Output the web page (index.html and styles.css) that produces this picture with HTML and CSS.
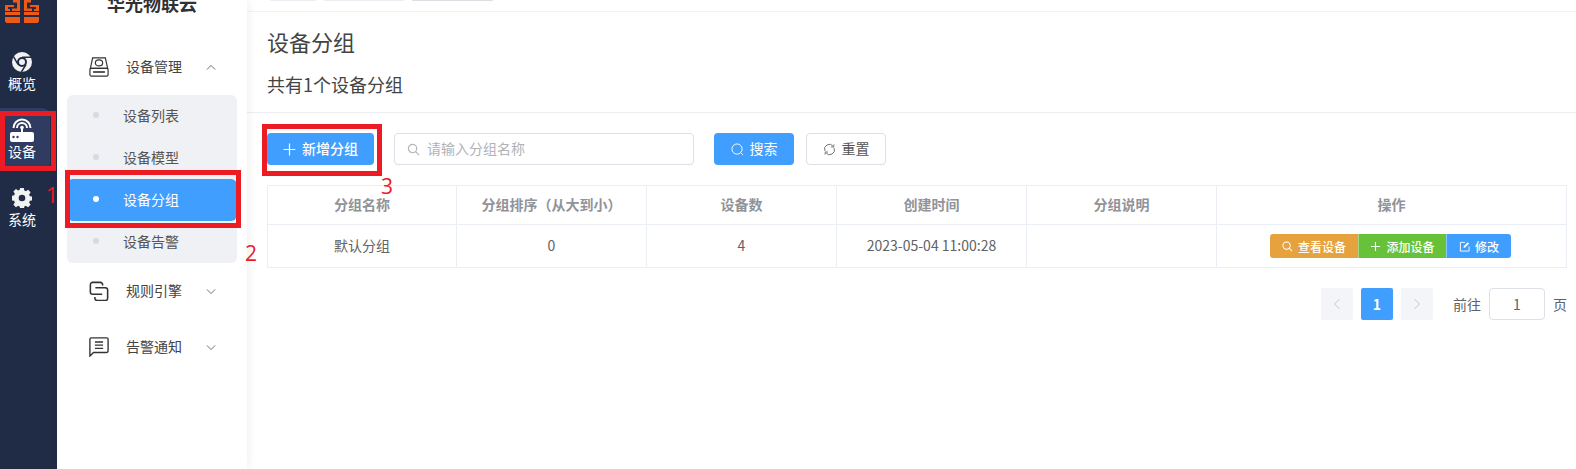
FILE: index.html
```html
<!DOCTYPE html>
<html lang="zh-CN">
<head>
<meta charset="utf-8">
<title>设备分组</title>
<link rel="stylesheet" href="styles.css">
</head>
<body>
<div class="app">
  <nav class="rail">
    <svg class="logo" viewBox="0 0 34 24" aria-hidden="true">
      <path fill="#ed5a17" d="M8 0h7v11H7V8.500h5V2.500H8zM0 5h9v2H3v2h2v2H0zM0 12h15v3H0zM0 17h15v6H1.500L0 21.500zM19 0h7v2.500h-4v6h5V11h-8zM25 5h9v6h-5V9h2V7h-6zM19 12h15v3H19zM19 17h15v4.500L32.500 23H19z"/>
    </svg>
    <a class="rail-item rail-first">
      <svg class="rail-icon" viewBox="0 0 24 24"><circle cx="12" cy="12" r="12" fill="#f2f2f2"/><circle cx="12" cy="12" r="6" fill="#202c46"/><circle cx="12" cy="12" r="3.600" fill="#f2f2f2"/><path d="M12 6.400h11M7.200 15 1.800 5.500M16.800 15l-5.500 9" stroke="#202c46" stroke-width="1.800" fill="none"/></svg>
      <span>概览</span>
    </a>
    <a class="rail-item rail-active">
      <svg class="rail-icon rail-icon-lg" viewBox="0 0 24 24"><path d="M3.500 10a8.500 8.500 0 0 1 17 0M7 10a5 5 0 0 1 10 0" fill="none" stroke="#fff" stroke-width="2"/><path d="M11 9h2v5h-2z" fill="#fff"/><circle cx="12" cy="9.500" r="1.800" fill="#fff"/><rect x="0" y="14" width="24" height="10" rx="2" fill="#fff"/><circle cx="3.500" cy="19" r="1.200" fill="#2f3b60"/><circle cx="7.500" cy="19" r="1.200" fill="#2f3b60"/></svg>
      <span>设备</span>
    </a>
    <a class="rail-item">
      <svg class="rail-icon" viewBox="0 0 24 24"><path fill="#f2f2f2" fill-rule="evenodd" d="M9.800 0h4.400l.6 3.100 1.800.8 2.700-1.700 3 3-1.700 2.700.8 1.900 3 .6v4.400l-3 .6-.8 1.900 1.700 2.700-3 3-2.700-1.700-1.800.8-.6 3H9.800l-.6-3-1.800-.8-2.700 1.700-3-3 1.700-2.700-.8-1.900-3-.6V9.400l3-.6.8-1.900L1.700 4.200l3-3 2.700 1.700 1.800-.8zM12 8a4 4 0 1 0 0 8 4 4 0 0 0 0-8z"/></svg>
      <span>系统</span>
    </a>
  </nav>

  <aside class="menu">
    <h1 class="brand">华光物联云</h1>
    <div class="group">
      <svg class="group-icon" viewBox="0 0 22 22"><g fill="none" stroke="#333" stroke-width="1.300"><path d="M4 1h14l2.500 11.500h-19z"/><rect x="1" y="12.500" width="20" height="8.500" rx="1.500"/><ellipse cx="11" cy="6.500" rx="4" ry="3.300"/><path d="M4.500 16.500h13" stroke-width="1.800"/></g></svg>
      <span class="group-label">设备管理</span>
      <svg class="chev" viewBox="0 0 12 8"><path d="M1 6.500 6 1.500l5 5" fill="none" stroke="#555" stroke-width="1"/></svg>
    </div>
    <ul class="sub">
      <li class="sub-item"><i class="dot"></i>设备列表</li>
      <li class="sub-item"><i class="dot"></i>设备模型</li>
      <li class="sub-item sub-active"><i class="dot"></i>设备分组</li>
      <li class="sub-item"><i class="dot"></i>设备告警</li>
    </ul>
    <div class="group">
      <svg class="group-icon" viewBox="0 0 22 22"><g fill="none" stroke="#333" stroke-width="1.700"><path d="M15 5V4a2.500 2.500 0 0 0-2.500-2.500H4A2.500 2.500 0 0 0 1.500 4v8A2.500 2.500 0 0 0 4 14.500h10.500"/><path d="M7 7.500h11A2.500 2.500 0 0 1 20.500 10v9a2.500 2.500 0 0 1-2.500 2.500H9A2.500 2.500 0 0 1 6.500 19v-1.500"/></g></svg>
      <span class="group-label">规则引擎</span>
      <svg class="chev" viewBox="0 0 12 8"><path d="M1 1.500 6 6.500l5-5" fill="none" stroke="#555" stroke-width="1"/></svg>
    </div>
    <div class="group">
      <svg class="group-icon" viewBox="0 0 22 22"><g fill="none" stroke="#333" stroke-width="1.500"><path d="M2.500 1h17A1.500 1.500 0 0 1 21 2.500v13a1.500 1.500 0 0 1-1.500 1.500H5l-4 4V2.500A1.500 1.500 0 0 1 2.500 1z"/><path d="M6.500 5.500h9M6.500 9h9M6.500 12.500h9"/></g></svg>
      <span class="group-label">告警通知</span>
      <svg class="chev" viewBox="0 0 12 8"><path d="M1 1.500 6 6.500l5-5" fill="none" stroke="#555" stroke-width="1"/></svg>
    </div>
  </aside>

  <main class="main">
    <div class="tabs">
      <span class="tab tab-a"></span><span class="tab tab-b"></span><span class="tab tab-c"></span>
    </div>
    <header class="head">
      <h2 class="title">设备分组</h2>
      <p class="count">共有1个设备分组</p>
    </header>
    <section class="body">
      <div class="toolbar">
        <button class="btn btn-primary btn-add"><svg class="ico" viewBox="0 0 12 12"><path d="M6 .5v11M.5 6h11" stroke="#fff" stroke-width="1.100"/></svg><span class="btn-text">新增分组</span></button>
        <label class="search">
          <svg class="ico ico-search" viewBox="0 0 14 14"><circle cx="6" cy="6" r="4.500" fill="none" stroke="#b4b6bc" stroke-width="1.300"/><path d="m9.500 9.500 3.500 3.500" stroke="#b4b6bc" stroke-width="1.300"/></svg>
          <span class="btn-text">请输入分组名称</span>
        </label>
        <button class="btn btn-primary btn-search"><svg class="ico" viewBox="0 0 14 14"><circle cx="6.500" cy="6.500" r="5.500" fill="none" stroke="#fff" stroke-width="1"/><path d="m10.500 10.500 2.500 2.500" stroke="#fff"/></svg><span class="btn-text">搜索</span></button>
        <button class="btn btn-plain"><svg class="ico" viewBox="0 0 14 14"><path d="M2 8.500A5.200 5.200 0 0 1 11 3.500M12 5.500A5.200 5.200 0 0 1 3 10.500" fill="none" stroke="#666" stroke-width="1"/><path d="m11.800 1.500-.3 3-3-.3M2.200 12.500l.3-3 3 .3" fill="none" stroke="#666" stroke-width=".9"/></svg><span class="btn-text">重置</span></button>
      </div>
      <table class="table">
        <colgroup><col class="c1"><col class="c2"><col class="c3"><col class="c4"><col class="c5"><col class="c6"></colgroup>
        <thead>
          <tr><th>分组名称</th><th>分组排序（从大到小）</th><th>设备数</th><th>创建时间</th><th>分组说明</th><th>操作</th></tr>
        </thead>
        <tbody>
          <tr>
            <td>默认分组</td><td>0</td><td>4</td><td>2023-05-04 11:00:28</td><td></td>
            <td>
              <div class="actions">
                <button class="act act-view"><svg class="ico-s" viewBox="0 0 12 12"><circle cx="5" cy="5" r="4" fill="none" stroke="#fff" stroke-width="1.100"/><path d="m8 8 3 3" stroke="#fff" stroke-width="1.100"/></svg>查看设备</button>
                <button class="act act-add"><svg class="ico-s" viewBox="0 0 12 12"><path d="M6 1v10M1 6h10" stroke="#fff" stroke-width="1.200"/></svg>添加设备</button>
                <button class="act act-edit"><svg class="ico-s" viewBox="0 0 12 12"><path d="M6.500 1.500H1.500v9.500h9.500V6" fill="none" stroke="#fff"/><path d="M5 7.500 5.300 5.500 9.500 1.300l1.500 1.500-4.200 4.200z" fill="#fff"/></svg>修改</button>
              </div>
            </td>
          </tr>
        </tbody>
      </table>
      <div class="pager">
        <span class="page page-off"><svg viewBox="0 0 8 12" class="pg-ico"><path d="M6.500 1 1.500 6l5 5" fill="none" stroke="#c0c4cc"/></svg></span>
        <span class="page page-on">1</span>
        <span class="page page-off"><svg viewBox="0 0 8 12" class="pg-ico"><path d="m1.500 1 5 5-5 5" fill="none" stroke="#c0c4cc"/></svg></span>
        <span class="goto">前往</span>
        <span class="page-input">1</span>
        <span class="goto-end">页</span>
      </div>
    </section>
  </main>

  <div class="mark mark-1"></div>
  <div class="mark mark-2"></div>
  <div class="mark mark-3"></div>
  <span class="num num-1">1</span>
  <span class="num num-2">2</span>
  <span class="num num-3">3</span>
</div>
</body>
</html>
```

FILE: styles.css
```css
* { box-sizing: border-box; }
html, body { margin: 0; height: 100%; overflow: hidden; background: #fff; }
body { font-family: "Noto Sans CJK SC", "Open Sans", sans-serif; color: #555; }
ul, h1, h2, p { margin: 0; padding: 0; }
button { font-family: inherit; border: 0; cursor: pointer; }

.app { position: relative; display: flex; width: 1576px; height: 469px; overflow: hidden; }

.rail { width: 57px; flex: none; background: #202c46; display: flex; flex-direction: column; }
.logo { display: block; width: 34px; height: 24px; margin-left: 5px; flex: none; }
.rail-item { display: flex; flex-direction: column; align-items: flex-start; width: 50px; height: 63px; color: #fff; font-size: 14px; line-height: 20px; padding-top: 10px; border-radius: 0 8px 8px 0; }
.rail-item span { margin-top: 1px; margin-left: 8px; white-space: nowrap; }
.rail-first { margin-top: 20px; height: 64px; padding-top: 8px; }
.rail-active { background: #2f3b60; margin-bottom: 7px; }
.rail-active span { margin-top: -1px; }
.rail-icon { width: 20px; height: 20px; margin-left: 12px; flex: none; }
.rail-icon-lg { width: 24px; height: 24px; margin-left: 10px; }

.menu { width: 190px; flex: none; background: #fff; display: flex; flex-direction: column; position: relative; z-index: 1; box-shadow: 2px 0 8px rgba(0, 21, 41, .06); }
.brand { height: 48px; margin-top: -9px; margin-left: 50px; font-size: 18px; line-height: 24px; font-weight: 700; color: #303133; }
.group { display: flex; align-items: center; height: 56px; padding-left: 32px; color: #444; font-size: 14px; }
.group-icon { width: 20px; height: 20px; flex: none; }
.group-label { margin-left: 17px; margin-bottom: 2px; width: 56px; white-space: nowrap; }
.chev { width: 10px; height: 7px; margin-left: 24px; }
.sub { list-style: none; width: 170px; margin-left: 10px; background: #f0f1f4; border-radius: 6px; overflow: hidden; }
.sub-item { display: flex; align-items: center; height: 42px; padding-left: 26px; padding-bottom: 2px; font-size: 14px; color: #555; }
.dot { width: 6px; height: 6px; border-radius: 50%; background: #d8d9e3; margin-right: 24px; flex: none; }
.sub-active { background: #409eff; color: #fff; border-radius: 6px; }
.sub-active .dot { background: #fff; }

.main { flex: 1; min-width: 0; display: flex; flex-direction: column; }
.tabs { height: 12px; padding-left: 23px; display: flex; gap: 7px; border-bottom: 1px solid #f3f3f6; align-items: flex-start; }
.tab { display: block; height: 1px; background: #ececf3; border-radius: 0 0 3px 3px; }
.tab-a { width: 46px; }
.tab-b { width: 80px; margin-left: 1px; }
.tab-c { width: 81px; margin-left: 1px; background: #dcdce3; }
.head { height: 101px; padding: 11px 0 0 20px; border-bottom: 1px solid #ededf2; }
.title { font-size: 22px; font-weight: 400; line-height: 36px; color: #444; }
.count { font-size: 18px; line-height: 28px; color: #444; margin-top: 11px; }

.body { padding: 20px 9px 0 20px; }
.toolbar { display: flex; align-items: center; height: 32px; }
.btn { display: flex; align-items: center; justify-content: center; height: 32px; border-radius: 4px; font-size: 14px; }
.btn-text { margin-bottom: 2px; }
.btn-primary { background: #409eff; color: #fff; }
.btn-add { width: 107px; font-weight: 500; }
.btn-search { width: 80px; margin-left: 20px; }
.btn-plain { width: 80px; margin-left: 12px; background: #fff; border: 1px solid #dcdfe6; color: #555; }
.ico { width: 13px; height: 13px; margin-right: 6px; flex: none; }
.ico-search { margin-right: 7px; }
.search { display: flex; align-items: center; width: 300px; height: 32px; margin-left: 20px; padding-left: 12px; border: 1px solid #dcdfe6; border-radius: 4px; font-size: 14px; color: #b0b3b8; }

.table { width: 1300px; table-layout: fixed; border-collapse: collapse; margin-top: 20px; font-size: 14px; }
.c1, .c2, .c3, .c4, .c5 { width: 190px; }
.c1 { width: 189px; }
.table th, .table td { border: 1px solid #ebeef5; text-align: center; padding: 0 0 2px; }
.table th { height: 39px; font-weight: 700; font-size: 14px; color: #909399; }
.table td { height: 43px; color: #606266; }
.actions { display: flex; justify-content: center; margin: 2px 2px 0 0; }
.act { display: flex; align-items: center; justify-content: center; height: 24px; color: #fff; font-size: 12px; font-weight: 500; border-left: 1px solid rgba(255, 255, 255, .4); padding: 0; }
.ico-s { width: 11px; height: 11px; margin-right: 5px; flex: none; }
.act-view { width: 88px; background: #e6a23c; border-left: 0; border-radius: 3px 0 0 3px; }
.act-add { width: 88px; background: #67c23a; }
.act-edit { width: 65px; background: #409eff; border-radius: 0 3px 3px 0; }

.pager { display: flex; align-items: center; justify-content: flex-end; height: 32px; margin-top: 20px; font-size: 14px; color: #606266; }
.page { display: flex; align-items: center; justify-content: center; width: 32px; height: 32px; margin-right: 8px; border-radius: 2px; }
.page-off { background: #f4f5f9; }
.page-on { background: #409eff; color: #fff; font-weight: 700; }
.pg-ico { width: 8px; height: 12px; }
.goto { margin-left: 12px; margin-right: 8px; }
.page-input { display: flex; align-items: center; justify-content: center; width: 56px; height: 32px; border: 1px solid #dcdfe6; border-radius: 4px; }
.goto-end { margin-left: 8px; }

.mark { position: absolute; z-index: 5; border: 5px solid #ed1c24; pointer-events: none; }
.mark-1 { left: 0; top: 111px; width: 56px; height: 60px; }
.mark-2 { left: 65px; top: 170px; width: 176px; height: 58px; }
.mark-3 { left: 262px; top: 124px; width: 120px; height: 52px; }
.num { position: absolute; z-index: 6; font-family: "Open Sans", sans-serif; font-size: 21px; line-height: 24px; color: #ed1c24; }
.num-1 { left: 46px; top: 183px; }
.num-2 { left: 245px; top: 241px; }
.num-3 { left: 381px; top: 174px; }
```
